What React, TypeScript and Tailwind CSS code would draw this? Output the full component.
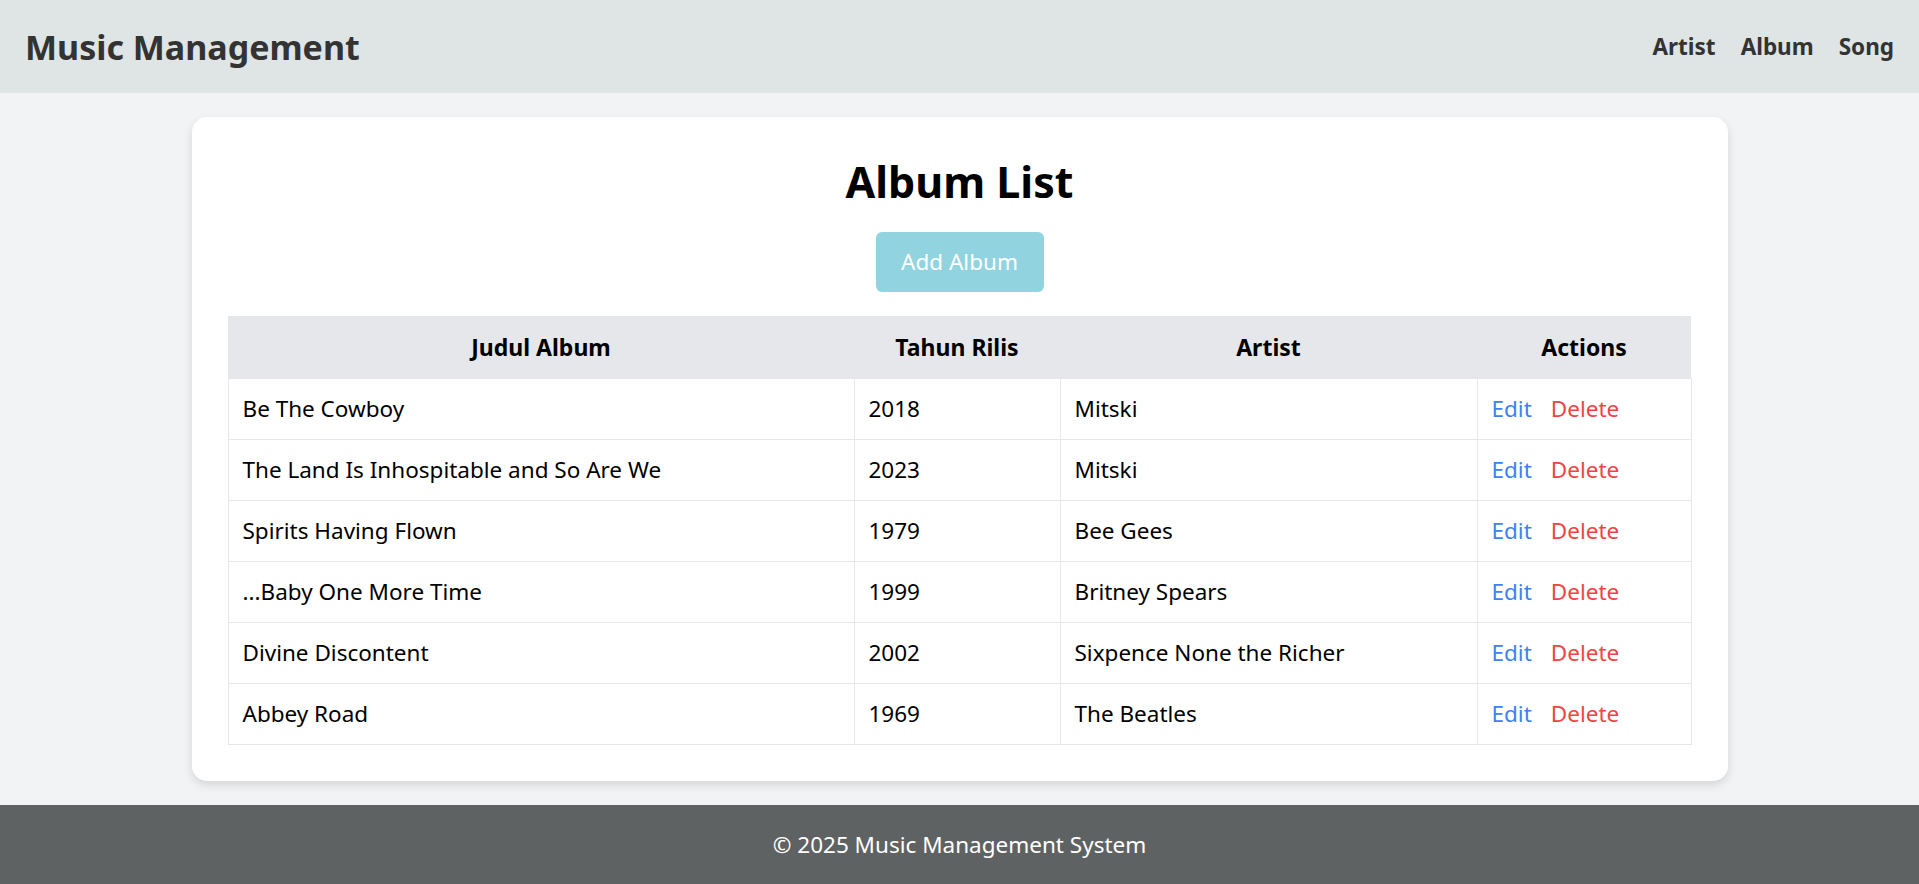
const albums = [
  { title: "Be The Cowboy", year: 2018, artist: "Mitski" },
  { title: "The Land Is Inhospitable and So Are We", year: 2023, artist: "Mitski" },
  { title: "Spirits Having Flown", year: 1979, artist: "Bee Gees" },
  { title: "...Baby One More Time", year: 1999, artist: "Britney Spears" },
  { title: "Divine Discontent", year: 2002, artist: "Sixpence None the Richer" },
  { title: "Abbey Road", year: 1969, artist: "The Beatles" },
];

function Navbar() {
  return (
    <header className="h-[93px] bg-[#dfe4e4] px-[25px] flex items-center justify-between text-[#333333]">
      <h1 className="text-[34px] font-bold leading-none">Music Management</h1>
      <nav className="flex items-center gap-[25px] text-[22.5px] font-bold">
        <a href="#">Artist</a>
        <a href="#">Album</a>
        <a href="#">Song</a>
      </nav>
    </header>
  );
}

function AlbumTable() {
  return (
    <table className="w-full border-collapse table-fixed text-[22.5px] text-black">
      <colgroup>
        <col className="w-[626px]" />
        <col className="w-[206px]" />
        <col className="w-[417px]" />
        <col className="w-[214px]" />
      </colgroup>
      <thead>
        <tr className="bg-[#e5e7eb] h-[62px] text-[23px]">
          <th className="font-bold px-[14px]">Judul Album</th>
          <th className="font-bold px-[14px]">Tahun Rilis</th>
          <th className="font-bold px-[14px]">Artist</th>
          <th className="font-bold px-[14px]">Actions</th>
        </tr>
      </thead>
      <tbody>
        {albums.map((a) => (
          <tr key={a.title} className="h-[61px]">
            <td className="border border-[#e5e7eb] px-[14px]">{a.title}</td>
            <td className="border border-[#e5e7eb] px-[14px]">{a.year}</td>
            <td className="border border-[#e5e7eb] px-[14px]">{a.artist}</td>
            <td className="border border-[#e5e7eb] px-[14px]">
              <a href="#" className="text-[#3b82f6] mr-[19px]">Edit</a>
              <a href="#" className="text-[#ef4444]">Delete</a>
            </td>
          </tr>
        ))}
      </tbody>
    </table>
  );
}

export default function App() {
  return (
    <div className="min-h-screen flex flex-col bg-[#f2f3f5] font-['Noto_Sans',sans-serif]">
      <Navbar />
      <main className="flex-1 py-[24px]">
        <div className="w-[1536px] mx-auto bg-white rounded-[15px] shadow-[0_4px_10px_rgba(0,0,0,0.12)] px-[36px] pt-[36px] pb-[36px]">
          <h2 className="text-center text-[43px] font-bold leading-[58px] text-black">Album List</h2>
          <div className="flex justify-center mt-[21px] mb-[24px]">
            <button className="w-[168px] h-[60px] rounded-[6px] bg-[#92d3e0] text-white text-[22.5px]">
              Add Album
            </button>
          </div>
          <AlbumTable />
        </div>
      </main>
      <footer className="h-[80px] bg-[#5f6263] flex items-center justify-center text-white text-[22.5px]">
        © 2025 Music Management System
      </footer>
    </div>
  );
}
